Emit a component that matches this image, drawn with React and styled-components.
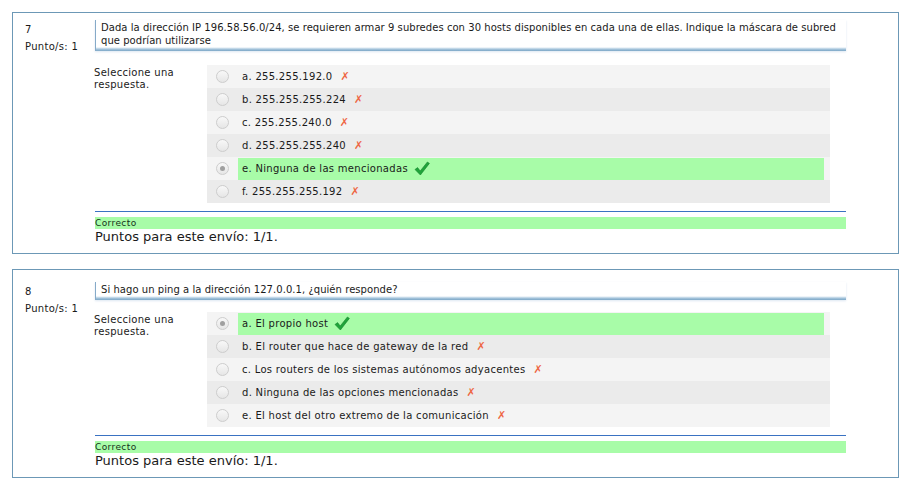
import React from "react";
import styled, { createGlobalStyle } from "styled-components";

const GlobalStyle = createGlobalStyle`
  html, body {
    margin: 0;
    padding: 0;
    background: #ffffff;
  }
  body {
    font-family: "DejaVu Sans", Verdana, sans-serif;
    color: #1a1a1a;
  }
`;

const Page = styled.div`
  display: flex;
  flex-direction: column;
  gap: 15px;
  padding: 12px 0 0 12px;
  width: 887px;
`;

const QuestionBox = styled.div`
  display: grid;
  grid-template-columns: 82px 751px;
  border: 1px solid #6c98b6;
  padding: ${(p) => p.$top}px 0 8px 0;
`;

const Info = styled.div`
  padding: 1px 0 0 12px;
  font-size: 10px;
  letter-spacing: 0.3px;
  line-height: 17px;
`;

const Content = styled.div`
  display: flex;
  flex-direction: column;
`;

const QuestionText = styled.div`
  border-left: 1px solid #86aac8;
  padding: 1px 4px 4px 5px;
  font-size: 10px;
  letter-spacing: 0.05px;
  line-height: 13px;
  background: linear-gradient(
    to bottom,
    #ffffff 0,
    #ffffff calc(100% - 4px),
    #dbe8f2 calc(100% - 3px),
    #a9c7dd calc(100% - 2px),
    #7ca7c7 100%
  );
  box-shadow: 0 1px 2px rgba(120, 160, 200, 0.25);
  width: 741px;
`;

const Answer = styled.div`
  display: flex;
  margin-top: ${(p) => p.$gap}px;
`;

const Prompt = styled.div`
  width: 113px;
  margin-left: -1px;
  padding-top: 2px;
  font-size: 10px;
  letter-spacing: 0.3px;
  line-height: 12px;
`;

const Options = styled.div`
  width: 623px;
  display: flex;
  flex-direction: column;
`;

const Row = styled.div`
  display: flex;
  align-items: center;
  height: 23px;
  background: ${(p) => (p.$odd ? "#ebebeb" : "#f4f4f4")};
`;

const RadioCell = styled.div`
  width: 31px;
  display: flex;
  justify-content: center;
`;

const Radio = styled.span`
  position: relative;
  width: 11px;
  height: 11px;
  border-radius: 50%;
  border: 1px solid #cdcdcd;
  background: linear-gradient(#f8f8f8, #e6e6e6);
  &::after {
    content: "";
    display: ${(p) => (p.$checked ? "block" : "none")};
    position: absolute;
    left: 3px;
    top: 3px;
    width: 5px;
    height: 5px;
    border-radius: 50%;
    background: #a0a0a0;
  }
`;

const Label = styled.div`
  flex: 1;
  margin-right: 6px;
  height: 22px;
  display: flex;
  align-items: center;
  gap: 6px;
  padding-left: 4px;
  font-size: 10px;
  letter-spacing: 0.3px;
  background: ${(p) => (p.$correct ? "#a8fca8" : "transparent")};
`;

const Cross = styled.span`
  color: #ee6644;
  font-size: 11px;
  font-style: italic;
  margin-left: 2px;
`;

const Rule = styled.div`
  margin-top: 8px;
  width: 751px;
  border-top: 1px solid #3a72c2;
`;

const Correct = styled.div`
  margin-top: 5px;
  height: 12px;
  background: #a8fca8;
  font-size: 9px;
  letter-spacing: 0.4px;
  line-height: 12px;
  color: #14321a;
`;

const Score = styled.div`
  font-size: 13px;
  line-height: 16px;
  color: #1a1a1a;
`;

const Check = () => (
  <svg width="16" height="15" viewBox="0 0 16 15">
    <path
      d="M1 8.5 L3.6 6.6 L6.2 10 L13.4 1 L15.4 2.4 L6.4 14 Z"
      fill="#1fa43a"
      stroke="#15852c"
      strokeWidth="0.6"
      strokeLinejoin="round"
    />
  </svg>
);

const questions = [
  {
    num: 7,
    top: 7,
    gap: 14,
    text:
      "Dada la dirección IP 196.58.56.0/24, se requieren armar 9 subredes con 30 hosts disponibles en cada una de ellas. Indique la máscara de subred que podrían utilizarse",
    options: [
      ["a. 255.255.192.0", false],
      ["b. 255.255.255.224", false],
      ["c. 255.255.240.0", false],
      ["d. 255.255.255.240", false],
      ["e. Ninguna de las mencionadas", true],
      ["f. 255.255.255.192", false],
    ],
  },
  {
    num: 8,
    top: 12,
    gap: 12,
    text: "Si hago un ping a la dirección 127.0.0.1, ¿quién responde?",
    options: [
      ["a. El propio host", true],
      ["b. El router que hace de gateway de la red", false],
      ["c. Los routers de los sistemas autónomos adyacentes", false],
      ["d. Ninguna de las opciones mencionadas", false],
      ["e. El host del otro extremo de la comunicación", false],
    ],
  },
];

export default function App() {
  return (
    <>
      <GlobalStyle />
      <Page>
        {questions.map((q) => (
          <QuestionBox key={q.num} $top={q.top}>
            <Info>
              <div>{q.num}</div>
              <div>Punto/s: 1</div>
            </Info>
            <Content>
              <QuestionText>{q.text}</QuestionText>
              <Answer $gap={q.gap}>
                <Prompt>
                  Seleccione una
                  <br />
                  respuesta.
                </Prompt>
                <Options>
                  {q.options.map(([label, correct], i) => (
                    <Row key={label} $odd={i % 2 === 1}>
                      <RadioCell>
                        <Radio $checked={correct} />
                      </RadioCell>
                      <Label $correct={correct}>
                        <span>{label}</span>
                        {correct ? <Check /> : <Cross>✗</Cross>}
                      </Label>
                    </Row>
                  ))}
                </Options>
              </Answer>
              <Rule />
              <Correct>Correcto</Correct>
              <Score>Puntos para este envío: 1/1.</Score>
            </Content>
          </QuestionBox>
        ))}
      </Page>
    </>
  );
}
